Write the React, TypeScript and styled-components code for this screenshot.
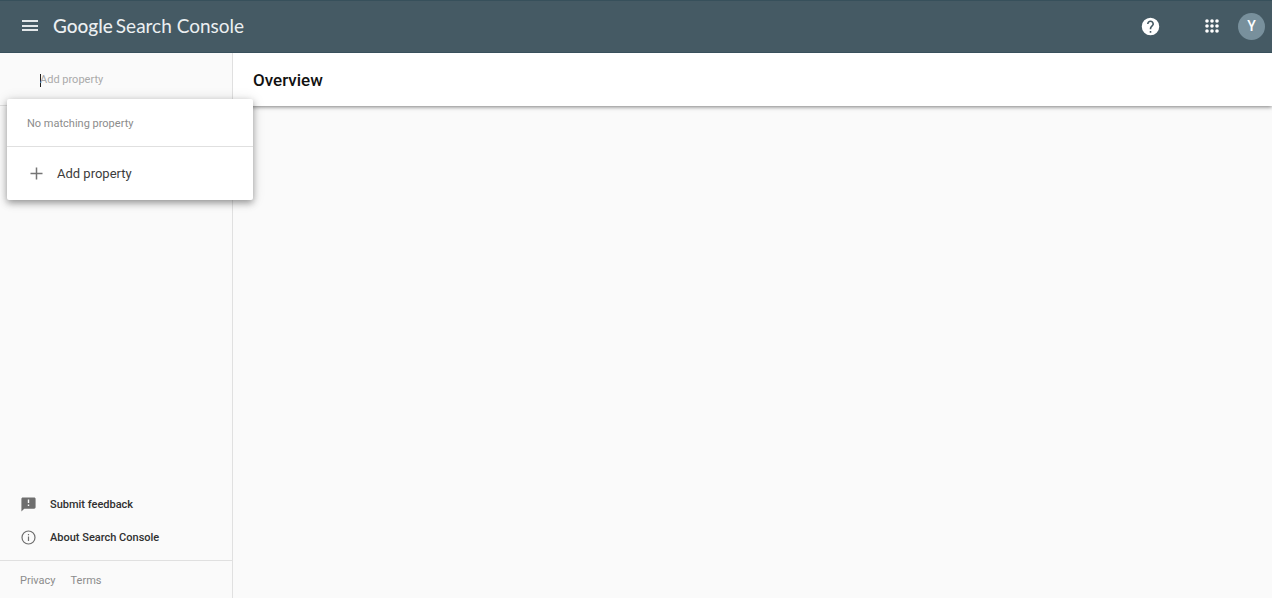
import React from "react";
import styled, { createGlobalStyle } from "styled-components";

const GlobalStyle = createGlobalStyle`
  *, *::before, *::after { box-sizing: border-box; }
  body {
    margin: 0;
    background: #fafafa;
    color: #212121;
    font-family: Roboto, "Liberation Sans", sans-serif;
    font-size: 11px;
    line-height: 16px;
  }
  button, input { font: inherit; color: inherit; }
`;

const Page = styled.div`
  min-height: 100vh;
  display: flex;
  flex-direction: column;
`;

const TopBar = styled.header`
  display: flex;
  align-items: center;
  height: 53px;
  padding: 0 7px 1px 18px;
  background: #455a64;
  border-top: 1px solid #37505b;
  border-bottom: 1px solid #38505c;
  color: #fff;
`;

const IconButton = styled.button`
  display: grid;
  place-items: center;
  width: 24px;
  height: 24px;
  padding: 0;
  border: 0;
  background: none;
  color: #fff;
  cursor: pointer;
`;

const Logo = styled.a`
  display: flex;
  align-items: baseline;
  gap: 3px;
  margin-left: 11px;
  color: #eceff1;
  font-family: Lato, "Open Sans", sans-serif;
  font-size: 19px;
  line-height: 24px;
  text-decoration: none;
  white-space: nowrap;
`;

const Brand = styled.span`
  font-weight: 500;
`;

const Product = styled.span`
  font-weight: 400;
`;

const Actions = styled.div`
  display: flex;
  align-items: center;
  margin-left: auto;
`;

const AppsButton = styled(IconButton)`
  margin: 0 14px 0 38px;
`;

const Avatar = styled.button`
  width: 27px;
  height: 27px;
  padding: 0;
  border: 0;
  border-radius: 50%;
  background: #78909c;
  color: #fff;
  font-size: 14px;
  font-weight: 500;
  line-height: 27px;
  text-align: center;
`;

const Body = styled.div`
  flex: 1;
  display: flex;
`;

const Sidebar = styled.aside`
  flex: none;
  width: 233px;
  display: flex;
  flex-direction: column;
  border-right: 1px solid #e0e0e0;
`;

const PropertySearch = styled.div`
  position: relative;
  z-index: 1;
  display: flex;
  align-items: center;
  height: 53px;
  padding: 2px 20px 0 40px;
  border-bottom: 1px solid #e0e0e0;
`;

const Caret = styled.span`
  width: 1px;
  height: 13px;
  margin-right: -1px;
  background: #212121;
`;

const SearchInput = styled.input`
  flex: 1;
  min-width: 0;
  padding: 0;
  border: 0;
  outline: 0;
  background: none;
  &::placeholder { color: #aaa; opacity: 1; }
`;

const Dropdown = styled.div`
  position: absolute;
  top: 46px;
  left: 7px;
  width: 246px;
  border-radius: 2px;
  background: #fff;
  box-shadow: 0 3px 7px rgba(0, 0, 0, 0.35), 0 1px 14px rgba(0, 0, 0, 0.12);
`;

const EmptyMessage = styled.p`
  margin: 0;
  padding: 17px 20px 14px;
  border-bottom: 1px solid #e0e0e0;
  color: #8c8c8c;
`;

const AddButton = styled.button`
  display: flex;
  align-items: center;
  gap: 11px;
  width: 100%;
  height: 53px;
  padding: 0 20px;
  border: 0;
  background: none;
  color: #3c3c3c;
  font-size: 13px;
  text-align: left;
  cursor: pointer;
  svg { color: #757575; }
`;

const SideLinks = styled.nav`
  display: flex;
  flex-direction: column;
  margin-top: auto;
  padding-bottom: 6px;
`;

const SideLink = styled.a`
  display: flex;
  align-items: center;
  gap: 13px;
  height: 33px;
  padding: 0 20px;
  color: #303030;
  font-weight: 500;
  line-height: 17px;
  text-decoration: none;
  svg { color: #6e6e6e; }
`;

const Legal = styled.footer`
  display: flex;
  gap: 15px;
  padding: 12px 20px 9px;
  border-top: 1px solid #e0e0e0;
`;

const LegalLink = styled.a`
  color: #8c8c8c;
  text-decoration: none;
`;

const Main = styled.main`
  flex: 1;
`;

const TitleBar = styled.div`
  display: flex;
  align-items: center;
  height: 53px;
  padding: 0 20px;
  background: #fff;
  box-shadow: 0 1px 4px rgba(0, 0, 0, 0.5);
  clip-path: inset(0 0 -8px 0);
`;

const Title = styled.h1`
  margin: 0;
  color: #111;
  font-size: 17px;
  font-weight: 500;
  line-height: 24px;
`;

const appDots = [5, 10, 15];

export default function App() {
  return (
    <Page>
      <GlobalStyle />
      <TopBar>
        <IconButton aria-label="Main menu">
          <svg width="24" height="24" viewBox="0 0 24 24" fill="#e2e7e9">
            <path d="M4 6h16v2H4zM4 11h16v2H4zM4 15h16v2H4z" />
          </svg>
        </IconButton>
        <Logo href="#home">
          <Brand>Google</Brand>
          <Product>Search Console</Product>
        </Logo>
        <Actions>
          <IconButton aria-label="Help">
            <svg width="21" height="21" viewBox="0 0 24 24" fill="currentColor">
              <path
                fillRule="evenodd"
                d="M12 2a10 10 0 1 0 0 20 10 10 0 0 0 0-20zm.9 17h-1.800v-2h1.800v2zm2.170-7.750l-.9.920C13.450 12.900 12.900 13.500 12.900 15h-1.800v-.5c0-1.100.45-2.100 1.170-2.830l1.240-1.260c.37-.36.59-.86.59-1.410 0-1.160-.94-2.100-2.100-2.100s-2.100.94-2.100 2.100H8c0-2.210 1.790-4 4-4s4 1.790 4 4c0 .88-.36 1.680-.93 2.250z"
              />
            </svg>
          </IconButton>
          <AppsButton aria-label="Google apps">
            <svg width="20" height="20" viewBox="0 0 20 20" fill="currentColor">
              {appDots.map((y) =>
                appDots.map((x) => <circle key={`${x}-${y}`} cx={x} cy={y} r="1.8" />)
              )}
            </svg>
          </AppsButton>
          <Avatar aria-label="Account">Y</Avatar>
        </Actions>
      </TopBar>
      <Body>
        <Sidebar>
          <PropertySearch>
            <Caret />
            <SearchInput type="text" aria-label="Property" placeholder="Add property" />
            <Dropdown>
              <EmptyMessage>No matching property</EmptyMessage>
              <AddButton>
                <svg width="19" height="19" viewBox="0 0 19 19" fill="none" stroke="currentColor" strokeWidth="1.5">
                  <path d="M9.500 3.500v12M3.500 9.500h12" />
                </svg>
                Add property
              </AddButton>
            </Dropdown>
          </PropertySearch>
          <SideLinks>
            <SideLink href="#feedback">
              <svg width="17" height="17" viewBox="0 0 24 24" fill="currentColor">
                <path d="M20 2H4c-1.100 0-2 .9-2 2v18l4-4h14c1.100 0 2-.9 2-2V4c0-1.100-.9-2-2-2zm-7 12h-2v-2h2v2zm0-4h-2V5h2v5z" />
              </svg>
              Submit feedback
            </SideLink>
            <SideLink href="#about">
              <svg width="17" height="17" viewBox="0 0 17 17" fill="none" stroke="currentColor">
                <circle cx="8.500" cy="8.500" r="6.500" strokeWidth="1.200" />
                <path d="M8.500 7.500v4.500M8.500 5v1.300" strokeWidth="1.200" />
              </svg>
              About Search Console
            </SideLink>
          </SideLinks>
          <Legal>
            <LegalLink href="#privacy">Privacy</LegalLink>
            <LegalLink href="#terms">Terms</LegalLink>
          </Legal>
        </Sidebar>
        <Main>
          <TitleBar>
            <Title>Overview</Title>
          </TitleBar>
        </Main>
      </Body>
    </Page>
  );
}
